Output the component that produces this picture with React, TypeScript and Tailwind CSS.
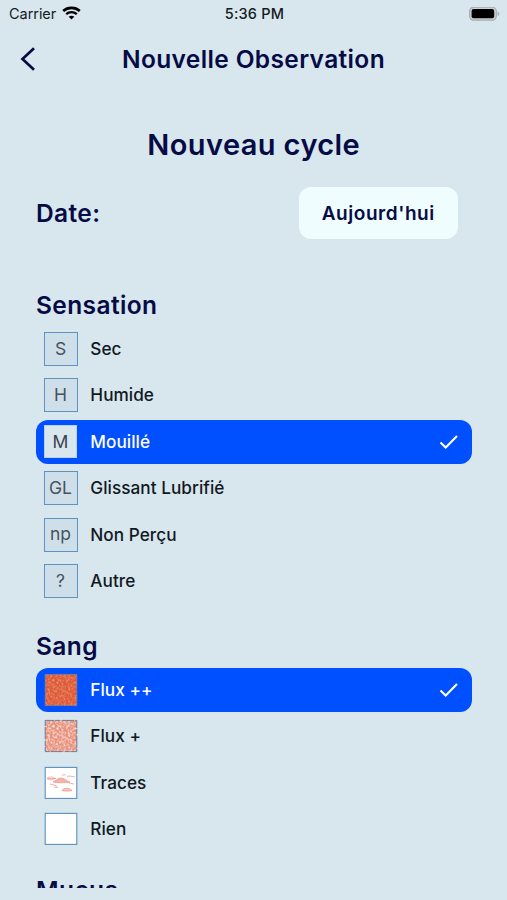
import type { ReactNode } from "react";

type Option = {
  label: string;
  icon: ReactNode;
  selected?: boolean;
};

function LetterIcon({ text, plain = false }: { text: string; plain?: boolean }) {
  return (
    <span
      className={
        plain
          ? "flex h-[33px] w-[33px] items-center justify-center border border-[#b9d3ef] bg-[#d8e6ed] text-[17.5px] text-[#37434d]"
          : "flex h-[34px] w-[34px] items-center justify-center border border-[#5d93c1] bg-[#cfdfe9] text-[17.5px] text-[#46525c]"
      }
    >
      {text}
    </span>
  );
}

function BloodIcon({ fill, speckle, id }: { fill: string; speckle: string; id: string }) {
  return (
    <svg width="34" height="34" viewBox="0 0 34 34">
      <filter id={id} x="0" y="0" width="100%" height="100%">
        <feTurbulence type="fractalNoise" baseFrequency="0.45" numOctaves="2" seed="4" />
        <feColorMatrix values="0 0 0 0 1  0 0 0 0 0.9  0 0 0 0 0.86  2.2 0 0 0 -0.85" />
      </filter>
      <rect x="1" y="1.2" width="32" height="31.6" fill={fill} />
      <rect x="1" y="1.2" width="32" height="31.6" filter={`url(#${id})`} opacity={speckle} />
      <rect
        x="1.2"
        y="1.4"
        width="31.6"
        height="31.2"
        fill="none"
        stroke="#6b7fa4"
        strokeDasharray="9 1 5 2 12 1"
      />
    </svg>
  );
}

function BoxIcon({ children }: { children?: ReactNode }) {
  return (
    <svg width="34" height="34" viewBox="0 0 34 34" fill="none">
      <rect x="1.2" y="1.4" width="31.6" height="31" fill="#fff" stroke="#5d8fbd" strokeWidth="1.1" />
      {children}
    </svg>
  );
}

function TracesIcon() {
  return (
    <BoxIcon>
      <g stroke="#ec9d91" strokeWidth="0.8">
        <path d="M9 16c3-1 4-4 8-4s5 3 9 4c-5 1-12 1-17 0Z" fill="#f2b3a8" />
        <path d="M18 24.5c2-3 7-3 10 0-3 .8-7 .8-10 0Z" fill="#f6c5bd" />
        <path d="M3 12.5c2-2 5-2 8 0-2 1.5-5 2-8 0ZM3 12.5h9M18 9.5c2-1.5 3-1 4 0M23 10.5c3-1 5 0 8 .5M6 18c3 1 5 1 7 2.5M25 17l5 1M10 21l4 .5" />
      </g>
    </BoxIcon>
  );
}

function CheckIcon() {
  return (
    <svg width="20" height="16" viewBox="0 0 20 16" fill="none">
      <path d="M1.5 8.4 6.7 13.5 18 2" stroke="#fff" strokeWidth="2.1" />
    </svg>
  );
}

const sensations: Option[] = [
  { label: "Sec", icon: <LetterIcon text="S" /> },
  { label: "Humide", icon: <LetterIcon text="H" /> },
  { label: "Mouillé", icon: <LetterIcon text="M" plain />, selected: true },
  { label: "Glissant Lubrifié", icon: <LetterIcon text="GL" /> },
  { label: "Non Perçu", icon: <LetterIcon text="np" /> },
  { label: "Autre", icon: <LetterIcon text="?" /> },
];

const bloods: Option[] = [
  {
    label: "Flux ++",
    icon: <BloodIcon id="flux-high" fill="#de5a36" speckle="0.35" />,
    selected: true,
  },
  { label: "Flux +", icon: <BloodIcon id="flux-low" fill="#e8917d" speckle="0.85" /> },
  { label: "Traces", icon: <TracesIcon /> },
  { label: "Rien", icon: <BoxIcon /> },
];

function OptionRow({ label, icon, selected }: Option) {
  return (
    <li
      className={
        selected
          ? "flex h-[44px] items-center rounded-[12px] bg-[#0050ff] pr-[13px] pl-[7px] text-white"
          : "flex h-[44px] items-center pr-[13px] pl-[7px] text-[#11191e]"
      }
    >
      <span className="flex w-[35px] justify-center">{icon}</span>
      <span className="ml-[12.3px] flex-1 text-[17.2px] font-medium tracking-[0.04px]">{label}</span>
      {selected && <CheckIcon />}
    </li>
  );
}

function Section({ title, options }: { title: string; options: Option[] }) {
  return (
    <section>
      <h3 className="h-[39px] text-[24.5px] leading-[34px] font-semibold tracking-[0.4px]">{title}</h3>
      <ul className="flex flex-col gap-[2.4px]">
        {options.map((option) => (
          <OptionRow key={option.label} {...option} />
        ))}
      </ul>
    </section>
  );
}

function StatusBar() {
  return (
    <div className="grid h-[28px] grid-cols-3 items-center pr-[7px] pl-[9px] text-[#151b1f]">
      <div className="flex items-center gap-[6px] text-[14.5px] tracking-[-0.05px]">
        Carrier
        <svg className="-mt-[2px]" width="19" height="14" viewBox="0 0 19 14" fill="none" stroke="#000">
          <path d="M1.2 5C5.8.8 13.2.8 17.8 5" strokeWidth="2.6" />
          <path d="M4.2 8.2c3-2.7 7.6-2.7 10.6 0" strokeWidth="2.3" />
          <path d="M9.5 13.5 6.7 10.7c1.5-1.4 4.1-1.4 5.6 0Z" fill="#000" stroke="none" />
        </svg>
      </div>
      <span className="text-center text-[14.5px] font-medium tracking-[0.2px]">5:36 PM</span>
      <svg className="justify-self-end" width="31" height="15" viewBox="0 0 31 15">
        <rect x="0.7" y="0.2" width="26.6" height="13" rx="4" fill="#cbd2d4" stroke="#a4acb0" strokeWidth="1.2" />
        <rect x="2.6" y="2.1" width="22.6" height="9.2" rx="2" fill="#000" />
        <path d="M28.7 4.5v4.6c2.2-.8 2.2-3.8 0-4.6Z" fill="#a4acb0" />
      </svg>
    </div>
  );
}

export default function App() {
  return (
    <div className="flex h-[900px] w-[507px] flex-col bg-[#d8e6ed] font-['Inter',sans-serif] text-[#060b45]">
      <StatusBar />
      <header className="flex h-[62px] items-center px-[20px]">
        <svg width="16" height="26" viewBox="0 0 16 26" fill="none">
          <path d="M14 2.2 2.5 13 14 23.8" stroke="#060b45" strokeWidth="2.7" />
        </svg>
        <h1 className="mr-[16px] flex-1 text-center text-[24.5px] font-semibold tracking-[0.36px]">
          Nouvelle Observation
        </h1>
      </header>
      <main className="h-[798px] overflow-hidden pr-[35.5px] pl-[36px]">
        <h2 className="pt-[34px] text-center text-[29px] leading-[42px] font-semibold tracking-[0.4px]">
          Nouveau cycle
        </h2>
        <div className="mt-[21px] flex items-center justify-between pr-[13.5px]">
          <span className="text-[24.5px] font-semibold tracking-[0.4px]">Date:</span>
          <button className="h-[52px] w-[159.5px] rounded-[12px] bg-[#effdfe] pt-[2px] text-[19px] font-semibold tracking-[0.55px]">
            Aujourd'hui
          </button>
        </div>
        <div className="flex flex-col pt-[49px]">
          <Section title="Sensation" options={sensations} />
          <div className="mt-[26px] mb-[22px]">
            <Section title="Sang" options={bloods} />
          </div>
          <Section title="Mucus" options={[]} />
        </div>
      </main>
    </div>
  );
}
